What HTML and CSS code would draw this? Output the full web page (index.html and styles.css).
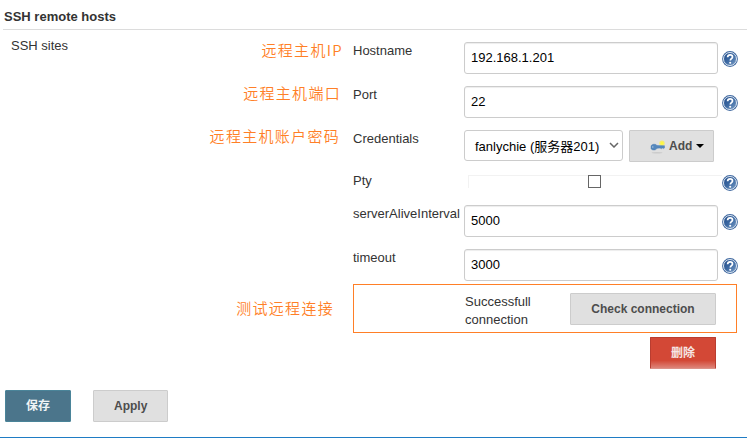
FILE: index.html
```html
<!DOCTYPE html>
<html lang="zh-CN">
<head>
<meta charset="utf-8">
<title>SSH remote hosts</title>
<link rel="stylesheet" href="styles.css">
</head>
<body>
<svg class="defs" width="0" height="0" aria-hidden="true">
  <defs>
    <linearGradient id="blue" x1="0" y1="0" x2="1" y2="1"><stop offset="0" stop-color="#204a87"/><stop offset=".5" stop-color="#3c69a3"/><stop offset="1" stop-color="#7d9fc6"/></linearGradient>
    <symbol id="help" viewBox="0 0 16 16">
      <circle cx="8" cy="8" r="7.9" fill="#4169a0"/>
      <circle cx="8" cy="8" r="6.5" fill="url(#blue)" stroke="#dfe8f2" stroke-width="1"/>
      <path d="M5.6 6.2C5.7 4.6 6.7 3.9 8.1 3.9c1.4 0 2.4.8 2.4 2 0 1.6-2.2 1.9-2.2 3.6" fill="none" stroke="#fff" stroke-width="1.7"/>
      <circle cx="8.2" cy="11.7" r="1.05" fill="#fff"/>
    </symbol>
  </defs>
</svg>
<main class="page">
  <h1 class="title">SSH remote hosts</h1>
  <div class="form">
    <div class="row">
      <div class="side"><span class="name">SSH sites</span><span class="note note-host">远程主机IP</span></div>
      <label class="label">Hostname</label>
      <input class="input" value="192.168.1.201">
      <svg class="help"><use href="#help"/></svg>
    </div>
    <div class="row">
      <div class="side"><span class="note note-port">远程主机端口</span></div>
      <label class="label">Port</label>
      <input class="input" value="22">
      <svg class="help"><use href="#help"/></svg>
    </div>
    <div class="row">
      <div class="side"><span class="note note-cred">远程主机账户密码</span></div>
      <label class="label">Credentials</label>
      <div class="credentials">
        <div class="select"><span>fanlychie (服务器201)</span><svg width="10" height="6" viewBox="0 0 10 6"><path d="M1 1l4 4 4-4" fill="none" stroke="#666" stroke-width="1.5"/></svg></div>
        <button class="button add"><svg class="key" width="16" height="16" viewBox="0 0 16 16">
          <ellipse cx="7" cy="12.800" rx="5.500" ry=".8" fill="#cacaca"/>
          <circle cx="12" cy="3.200" r="2.700" fill="#f6ee6c"/>
          <circle cx="12" cy="3.200" r="1.200" fill="#fffb3c"/>
          <path d="M1 6c.8-2.200 4.800-2.300 6-.5l7.500.2v2.200l-1.200.7-1-.7-1 .9-1.200-.7L7 8.300C6 10.600 2 10.500 1 8.700z" fill="#5487bd" stroke="#4577ad" stroke-width=".4"/>
          <circle cx="2.800" cy="7" r=".7" fill="#b5cce3"/>
        </svg>Add<svg class="caret" width="8" height="4" viewBox="0 0 8 4"><path d="M0 0h8L4 4z"/></svg></button>
      </div>
    </div>
    <div class="row row-pty">
      <div class="side"></div>
      <label class="label">Pty</label>
      <div class="check"><span class="box"></span></div>
      <svg class="help"><use href="#help"/></svg>
    </div>
    <div class="row">
      <div class="side"></div>
      <label class="label">serverAliveInterval</label>
      <input class="input" value="5000">
      <svg class="help"><use href="#help"/></svg>
    </div>
    <div class="row row-timeout">
      <div class="side"></div>
      <label class="label">timeout</label>
      <input class="input" value="3000">
      <svg class="help"><use href="#help"/></svg>
    </div>
    <div class="test">
      <div class="side"><span class="note note-test">测试远程连接</span></div>
      <div class="result"><span class="status">Successfull connection</span><button class="button">Check connection</button></div>
    </div>
    <div class="remove"><button class="button danger">删除</button></div>
  </div>
  <footer class="actions"><button class="button primary">保存</button><button class="button">Apply</button></footer>
</main>
</body>
</html>
```
FILE: styles.css
```css
* { box-sizing: border-box; }
body {
  margin: 0;
  background: #fff;
  color: #333;
  font: 13px/18px "Liberation Sans", "Noto Sans CJK SC", sans-serif;
}
.defs { display: block; }
.page {
  height: 438px;
  border-bottom: 1px solid #1f7cc4;
  overflow: hidden;
}
.title {
  margin: 0 0 0 3px;
  height: 30px;
  padding: 8px 0 0 1px;
  border-bottom: 1px solid #dcdcdc;
  font-size: 13px;
  line-height: 18px;
}
.form { padding-top: 12px; }
.row {
  display: grid;
  grid-template-columns: 353px 111px 254px 16px;
  height: 32px;
  margin-bottom: 12px;
}
.side {
  display: flex;
  justify-content: flex-end;
  padding-right: 10px;
}
.name {
  margin: -5px auto 0 11px;
}
.note {
  color: #ff7f27;
  font: 350 15px/18px "Noto Sans CJK SC", sans-serif;
  letter-spacing: 1.3px;
  white-space: nowrap;
}
.note-host { margin-top: -1px; }
.note-port { margin: -2px 2px 0 0; }
.note-cred { margin: -3px 3px 0 0; }
.note-test { margin: 15px 9px 0 0; }
.label { white-space: nowrap; }
.input {
  width: 254px;
  height: 32px;
  padding: 0 6px 1px;
  border: 1px solid #ccc;
  border-radius: 3px;
  box-shadow: inset 0 1px 1px rgba(0, 0, 0, .075);
  color: #000;
  font: 13px "Liberation Sans", sans-serif;
}
.help {
  width: 16px;
  height: 16px;
  margin: 9px 0 0 4px;
}
.credentials {
  display: flex;
  align-items: flex-start;
  gap: 6px;
}
.select {
  display: flex;
  align-items: center;
  justify-content: space-between;
  width: 159px;
  height: 31px;
  padding: 3px 3px 0 10px;
  border: 1px solid #ccc;
  border-radius: 3px;
  color: #000;
  font-size: 13px;
  white-space: nowrap;
}
.select svg { margin-top: -4px; }
.button {
  height: 32px;
  padding: 0 20px;
  border: 1px solid #ccc;
  border-radius: 1px;
  background: #e0e0e0;
  color: #4d4d4d;
  font: bold 12px/18px "Liberation Sans", "Noto Sans CJK SC", sans-serif;
  white-space: nowrap;
}
.add {
  display: flex;
  align-items: center;
  width: 85px;
}
.key {
  flex: none;
  margin: 4px 3px 0 0;
}
.caret {
  flex: none;
  margin-left: 4px;
}
.row-pty {
  height: 13px;
  margin: 13px 0 17px;
}
.row-pty .label { margin-top: -3px; }
.row-pty .help { margin-top: 0; }
.check {
  display: flex;
  justify-content: center;
  width: 254px;
  height: 13px;
  margin-left: 4px;
  padding-right: 2px;
  border-top: 1px solid #f2f2f2;
  border-left: 1px solid #f2f2f2;
}
.box {
  width: 13px;
  height: 13px;
  margin-top: -1px;
  border: 1px solid #666;
  background: #fff;
}
.row-timeout { margin-bottom: 3px; }
.test {
  display: flex;
}
.test .side { width: 353px; }
.result {
  display: flex;
  justify-content: space-between;
  width: 384px;
  height: 49px;
  padding: 8px 20px 0 111px;
  border: 1px solid #ff7f27;
}
.result .button { width: 146px; }
.status {
  width: 90px;
  line-height: 18px;
}
.remove {
  display: flex;
  justify-content: flex-end;
  width: 716px;
  margin-top: 4px;
}
.danger {
  width: 66px;
  border-color: #b93d30;
  border-bottom-color: #dc9288;
  background: linear-gradient(#d34836 75%, #dd8479);
  color: #f6e6e4;
}
.actions {
  display: flex;
  gap: 22px;
  margin: 21px 0 0 5px;
}
.primary {
  width: 66px;
  border-color: #4a8499;
  background: #4b758b;
  color: #f0f4f6;
}
```
